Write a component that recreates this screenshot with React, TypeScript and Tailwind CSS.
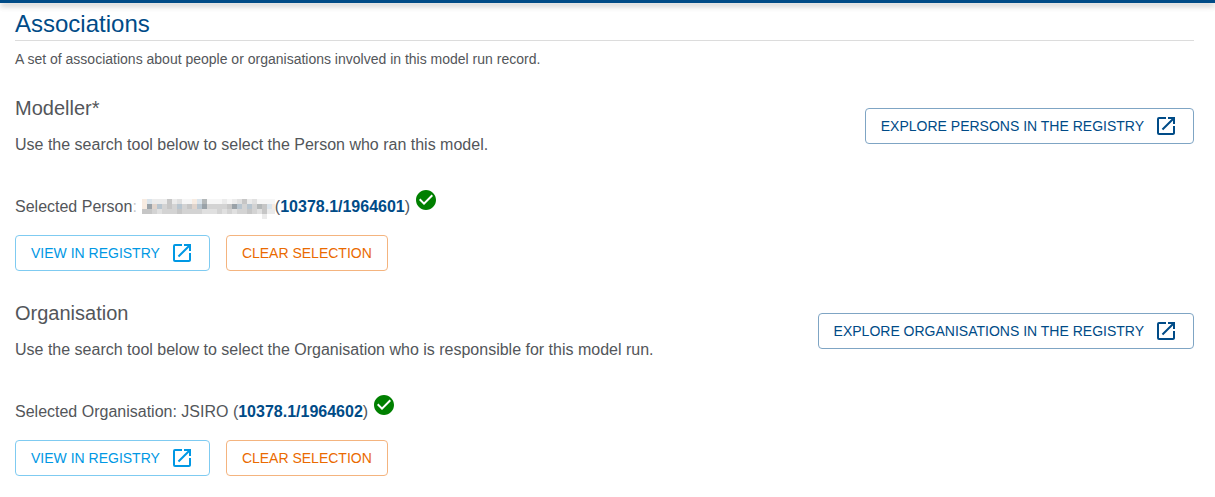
import type { ReactNode } from "react";
import { MdCheckCircle, MdOpenInNew } from "react-icons/md";

type Tone = "navy" | "sky" | "orange";

const tones: Record<Tone, string> = {
  navy: "border-[#7fa5c4] text-[#004b87]",
  sky: "border-[#7fcbf1] text-[#0098e4]",
  orange: "border-[#f4b47f] text-[#ea6a00]",
};

const buttonBase =
  "inline-flex h-9 shrink-0 items-center rounded border px-[15px] text-sm uppercase whitespace-nowrap";

function LinkButton({ tone, children }: { tone: Tone; children: ReactNode }) {
  return (
    <a href="#registry" className={`${buttonBase} ${tones[tone]}`}>
      {children}
      <MdOpenInNew aria-hidden="true" className="ml-2.5 size-6" />
    </a>
  );
}

// Rows of shades for the obscured name; "." is an empty cell.
const maskRows = [
  "pb11141200pb500010124120000",
  "p6qc343c34qc6333346c3c354bp",
  "443233343333222323233432411",
  "........................1..",
];
const shades: Record<string, string> = {
  "0": "#f6f6f6",
  "1": "#ebebeb",
  "2": "#e0e0e0",
  "3": "#d3d3d3",
  "4": "#c6c6c6",
  "5": "#b4b8b9",
  "6": "#9aa2a8",
  b: "#dbe4eb",
  c: "#b8c5cf",
  p: "#f7ebe1",
  q: "#e0d4cc",
};

function MaskedName() {
  return (
    <svg
      role="img"
      aria-label="Name hidden"
      viewBox="0 0 133 20"
      shapeRendering="crispEdges"
      className="mt-1 ml-[5px] h-5 w-[133px] shrink-0"
    >
      {maskRows.flatMap((row, y) =>
        row.split("").map((cell, x) =>
          shades[cell] ? (
            <rect key={`${x}-${y}`} x={x * 5} y={y * 5} width="5" height="5" fill={shades[cell]} />
          ) : null,
        ),
      )}
    </svg>
  );
}

type AssociationProps = {
  title: string;
  description: string;
  explore: string;
  subject: ReactNode;
  id: string;
};

function Association({ title, description, explore, subject, id }: AssociationProps) {
  return (
    <section>
      <div className="flex items-center justify-between gap-4">
        <div className="pb-0.5">
          <h2 className="text-xl leading-[30px]">{title}</h2>
          <p className="mt-2.5 leading-6">{description}</p>
        </div>
        <LinkButton tone="navy">{explore}</LinkButton>
      </div>
      <div className="mt-[30px] flex h-9 items-center whitespace-pre">
        {subject}
        <span>
          (
          <a href="#record" className="font-bold text-[#004b87]">
            {id}
          </a>
          )
        </span>
        <MdCheckCircle aria-label="Valid" className="mb-3.5 ml-1 size-6 text-[#008000]" />
      </div>
      <div className="mt-2.5 flex gap-4">
        <LinkButton tone="sky">View in registry</LinkButton>
        <button type="button" className={`${buttonBase} ${tones.orange}`}>
          Clear selection
        </button>
      </div>
    </section>
  );
}

export default function App() {
  return (
    <div className="bg-white font-['Liberation_Sans',Arial,sans-serif] text-base text-[#53565a]">
      <header className="h-[3px] bg-[#004b87] shadow-[0_2px_4px_-1px_rgba(0,0,0,0.2),0_4px_5px_rgba(0,0,0,0.14),0_1px_10px_rgba(0,0,0,0.12)]" />
      <main className="pt-[5px] pr-[21px] pb-5 pl-[15px]">
        <h1 className="border-b border-[#dcdcdc] text-2xl leading-8 text-[#004b87]">Associations</h1>
        <p className="mt-2 text-sm leading-5">
          A set of associations about people or organisations involved in this model run record.
        </p>
        <div className="mt-6 flex flex-col gap-[27px]">
          <Association
            title="Modeller*"
            description="Use the search tool below to select the Person who ran this model."
            explore="Explore persons in the registry"
            subject={
              <>
                <span>
                  Selected Person<span className="text-[#c8c8c8]">:</span>
                </span>
                <MaskedName />
              </>
            }
            id="10378.1/1964601"
          />
          <Association
            title="Organisation"
            description="Use the search tool below to select the Organisation who is responsible for this model run."
            explore="Explore organisations in the registry"
            subject={<span>{"Selected Organisation: JSIRO "}</span>}
            id="10378.1/1964602"
          />
        </div>
      </main>
    </div>
  );
}
